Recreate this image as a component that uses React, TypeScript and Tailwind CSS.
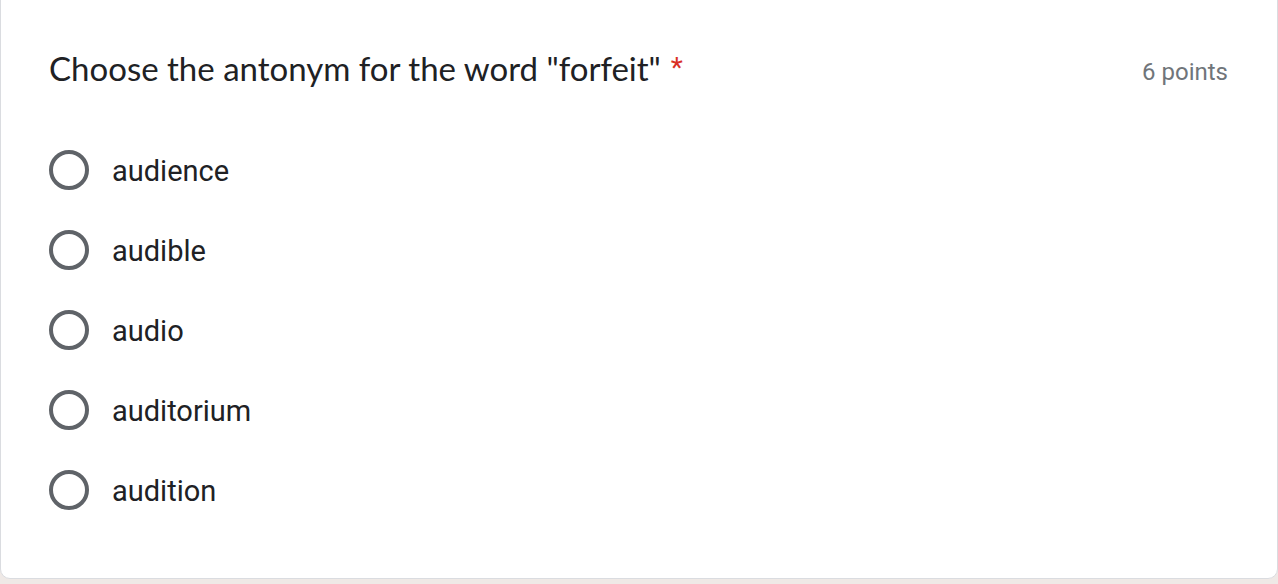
const options = ["audience", "audible", "audio", "auditorium", "audition"];

export default function App() {
  return (
    <div className="h-[584px] w-[1278px] overflow-hidden bg-[#efe9e6]">
      <div className="-mt-[10px] h-[589px] rounded-[10px] border border-[#dadce0] bg-white pl-[48px] pr-[49px]">
        <div className="flex h-[139px] items-start justify-between pt-[57px]">
          <h1 className="flex items-start gap-[10px] text-[#202124]">
            <span className="font-['Lato',sans-serif] text-[33px] leading-[40px]">
              Choose the antonym for the word "forfeit"
            </span>
            <span className="font-['Roboto',sans-serif] text-[28px] leading-[40px] text-[#d93025]">*</span>
          </h1>
          <span className="pt-[10px] font-['Roboto',sans-serif] text-[24px] leading-[28px] text-[#70757a]">
            6 points
          </span>
        </div>
        <div className="flex flex-col">
          {options.map((o) => (
            <label key={o} className="flex h-[80px] items-center gap-[23px]">
              <span className="h-[40px] w-[40px] rounded-full border-[4px] border-[#5f6368]" />
              <span className="pt-[2px] font-['Roboto',sans-serif] text-[29px] leading-[32px] text-[#202124]">
                {o}
              </span>
            </label>
          ))}
        </div>
      </div>
    </div>
  );
}
